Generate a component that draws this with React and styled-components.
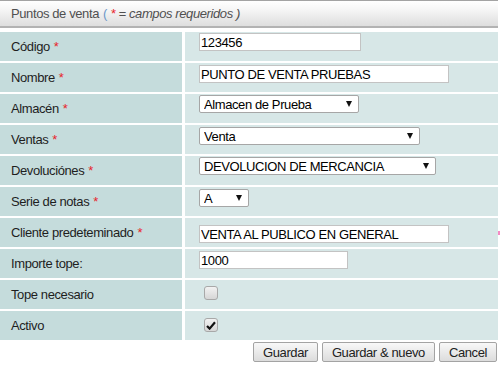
import React from 'react';
import styled, { createGlobalStyle } from 'styled-components';

const GlobalStyle = createGlobalStyle`
    html, body {
        margin: 0;
        padding: 0;
        background: #fff;
        font-family: "Liberation Sans", Arial, sans-serif;
        font-size: 13px;
        letter-spacing: -0.4px;
        color: #1e1e1e;
    }
`;

const Page = styled.div`
    width: 498px;
    display: flex;
    flex-direction: column;
`;

const TitleBar = styled.div`
    height: 25px;
    display: flex;
    align-items: center;
    padding-left: 11px;
    border-top: 1px solid #a3a3a3;
    border-bottom: 2px solid #b3b3b3;
    background: linear-gradient(to bottom, #ffffff 0%, #f7f7f7 30%, #dedede 100%);
    color: #505050;
    font-size: 13px;
`;

const Hint = styled.span`
    margin-left: 4px;
    color: #6a97c8;
`;

const HintText = styled.em`
    color: #505050;
`;

const Star = styled.span`
    color: #e8242b;
    margin: 0 3px 0 4px;
`;

const FormGrid = styled.div`
    margin-top: 4px;
    display: grid;
    grid-template-columns: 182px 1fr;
    grid-auto-rows: 29px;
    column-gap: 3px;
    row-gap: 2px;
`;

const LabelCell = styled.div`
    background: #c5dcdc;
    display: flex;
    align-items: center;
    padding-left: 11px;
    color: #1e1e1e;
`;

const Required = styled.span`
    color: #e8242b;
    margin-left: 4px;
`;

const ValueCell = styled.div`
    position: relative;
    background: #d7e7e7;
    display: flex;
    align-items: flex-start;
    padding-left: 14px;
    padding-top: ${p => p.$offset || 1}px;
`;

const TextInput = styled.input`
    box-sizing: border-box;
    width: ${p => p.$w}px;
    height: 18px;
    margin: 0;
    padding: 0 1px;
    border: 1px solid #c3c3c3;
    background: #fff;
    font-family: "Liberation Sans", Arial, sans-serif;
    font-size: 13px;
    letter-spacing: -0.4px;
    color: #000;
    outline: none;
`;

const SelectWrap = styled.div`
    position: relative;
    width: ${p => p.$w}px;
    height: 18px;
`;

const Select = styled.select`
    appearance: none;
    -webkit-appearance: none;
    box-sizing: border-box;
    width: 100%;
    height: 18px;
    margin: 0;
    padding: 0 0 0 4px;
    border: 1px solid #a6a6a6;
    border-radius: 2px;
    background: #fff;
    font-family: "Liberation Sans", Arial, sans-serif;
    font-size: 13px;
    letter-spacing: -0.4px;
    color: #000;
    outline: none;
`;

const Arrow = styled.span`
    position: absolute;
    right: 7px;
    top: 6px;
    width: 0;
    height: 0;
    border-left: 3px solid transparent;
    border-right: 3px solid transparent;
    border-top: 6px solid #111;
    pointer-events: none;
`;

const CheckBox = styled.span`
    box-sizing: border-box;
    margin-left: 5px;
    width: 14px;
    height: 14px;
    border: 1px solid #a8a8a8;
    border-radius: 3px;
    background: linear-gradient(to bottom, #f2f2f2, #d6d6d6);
    display: flex;
    align-items: center;
    justify-content: center;
`;

const PinkMark = styled.span`
    position: absolute;
    right: -2px;
    top: 13px;
    width: 2px;
    height: 4px;
    background: #f58ac4;
`;

const ButtonRow = styled.div`
    display: flex;
    justify-content: flex-end;
    gap: 4px;
    margin-top: 2px;
    padding-right: 1px;
`;

const Button = styled.button`
    height: 20px;
    padding: 0 9px;
    margin: 0;
    border: 1px solid #a3a3a3;
    border-radius: 2px;
    background: linear-gradient(to bottom, #f8f8f8, #dcdcdc);
    font-family: "Liberation Sans", Arial, sans-serif;
    font-size: 13px;
    letter-spacing: -0.4px;
    color: #222;
`;

function Dropdown({ width, value }) {
    return (
        <SelectWrap $w={width}>
            <Select defaultValue={value}>
                <option>{value}</option>
            </Select>
            <Arrow />
        </SelectWrap>
    );
}

function Check({ checked }) {
    return (
        <CheckBox>
            {checked && (
                <svg width="10" height="9" viewBox="0 0 10 9">
                    <path d="M1 5 L3.6 7.6 L9 1.2" fill="none" stroke="#111" strokeWidth="2.2" />
                </svg>
            )}
        </CheckBox>
    );
}

const fields = [
    { label: 'Código', req: true, input: { type: 'text', w: 162, value: '123456' } },
    { label: 'Nombre', req: true, input: { type: 'text', w: 250, value: 'PUNTO DE VENTA PRUEBAS' }, offset: 2 },
    { label: 'Almacén', req: true, input: { type: 'select', w: 160, value: 'Almacen de Prueba' } },
    { label: 'Ventas', req: true, input: { type: 'select', w: 221, value: 'Venta' }, offset: 2 },
    { label: 'Devoluciónes', req: true, input: { type: 'select', w: 237, value: 'DEVOLUCION DE MERCANCIA' } },
    { label: 'Serie de notas', req: true, input: { type: 'select', w: 50, value: 'A' }, offset: 2 },
    { label: 'Cliente predeteminado', req: true, input: { type: 'text', w: 250, value: 'VENTA AL PUBLICO EN GENERAL' }, offset: 7, pink: true },
    { label: 'Importe tope:', input: { type: 'text', w: 149, value: '1000' }, offset: 2 },
    { label: 'Tope necesario', input: { type: 'check', checked: false }, offset: 6 },
    { label: 'Activo', input: { type: 'check', checked: true }, offset: 7 },
];

function Field({ field }) {
    const { input } = field;
    let control;
    if (input.type === 'select') {
        control = <Dropdown width={input.w} value={input.value} />;
    } else if (input.type === 'check') {
        control = <Check checked={input.checked} />;
    } else {
        control = <TextInput $w={input.w} defaultValue={input.value} />;
    }
    return (
        <>
            <LabelCell>
                {field.label}
                {field.req && <Required>*</Required>}
            </LabelCell>
            <ValueCell $offset={field.offset}>
                {control}
                {field.pink && <PinkMark />}
            </ValueCell>
        </>
    );
}

export default function App() {
    return (
        <Page>
            <GlobalStyle />
            <TitleBar>
                Puntos de venta
                <Hint>
                    (<Star>*</Star><HintText>= campos requeridos )</HintText>
                </Hint>
            </TitleBar>
            <FormGrid>
                {fields.map(f => <Field key={f.label} field={f} />)}
            </FormGrid>
            <ButtonRow>
                <Button>Guardar</Button>
                <Button>Guardar &amp; nuevo</Button>
                <Button>Cancel</Button>
            </ButtonRow>
        </Page>
    );
}
